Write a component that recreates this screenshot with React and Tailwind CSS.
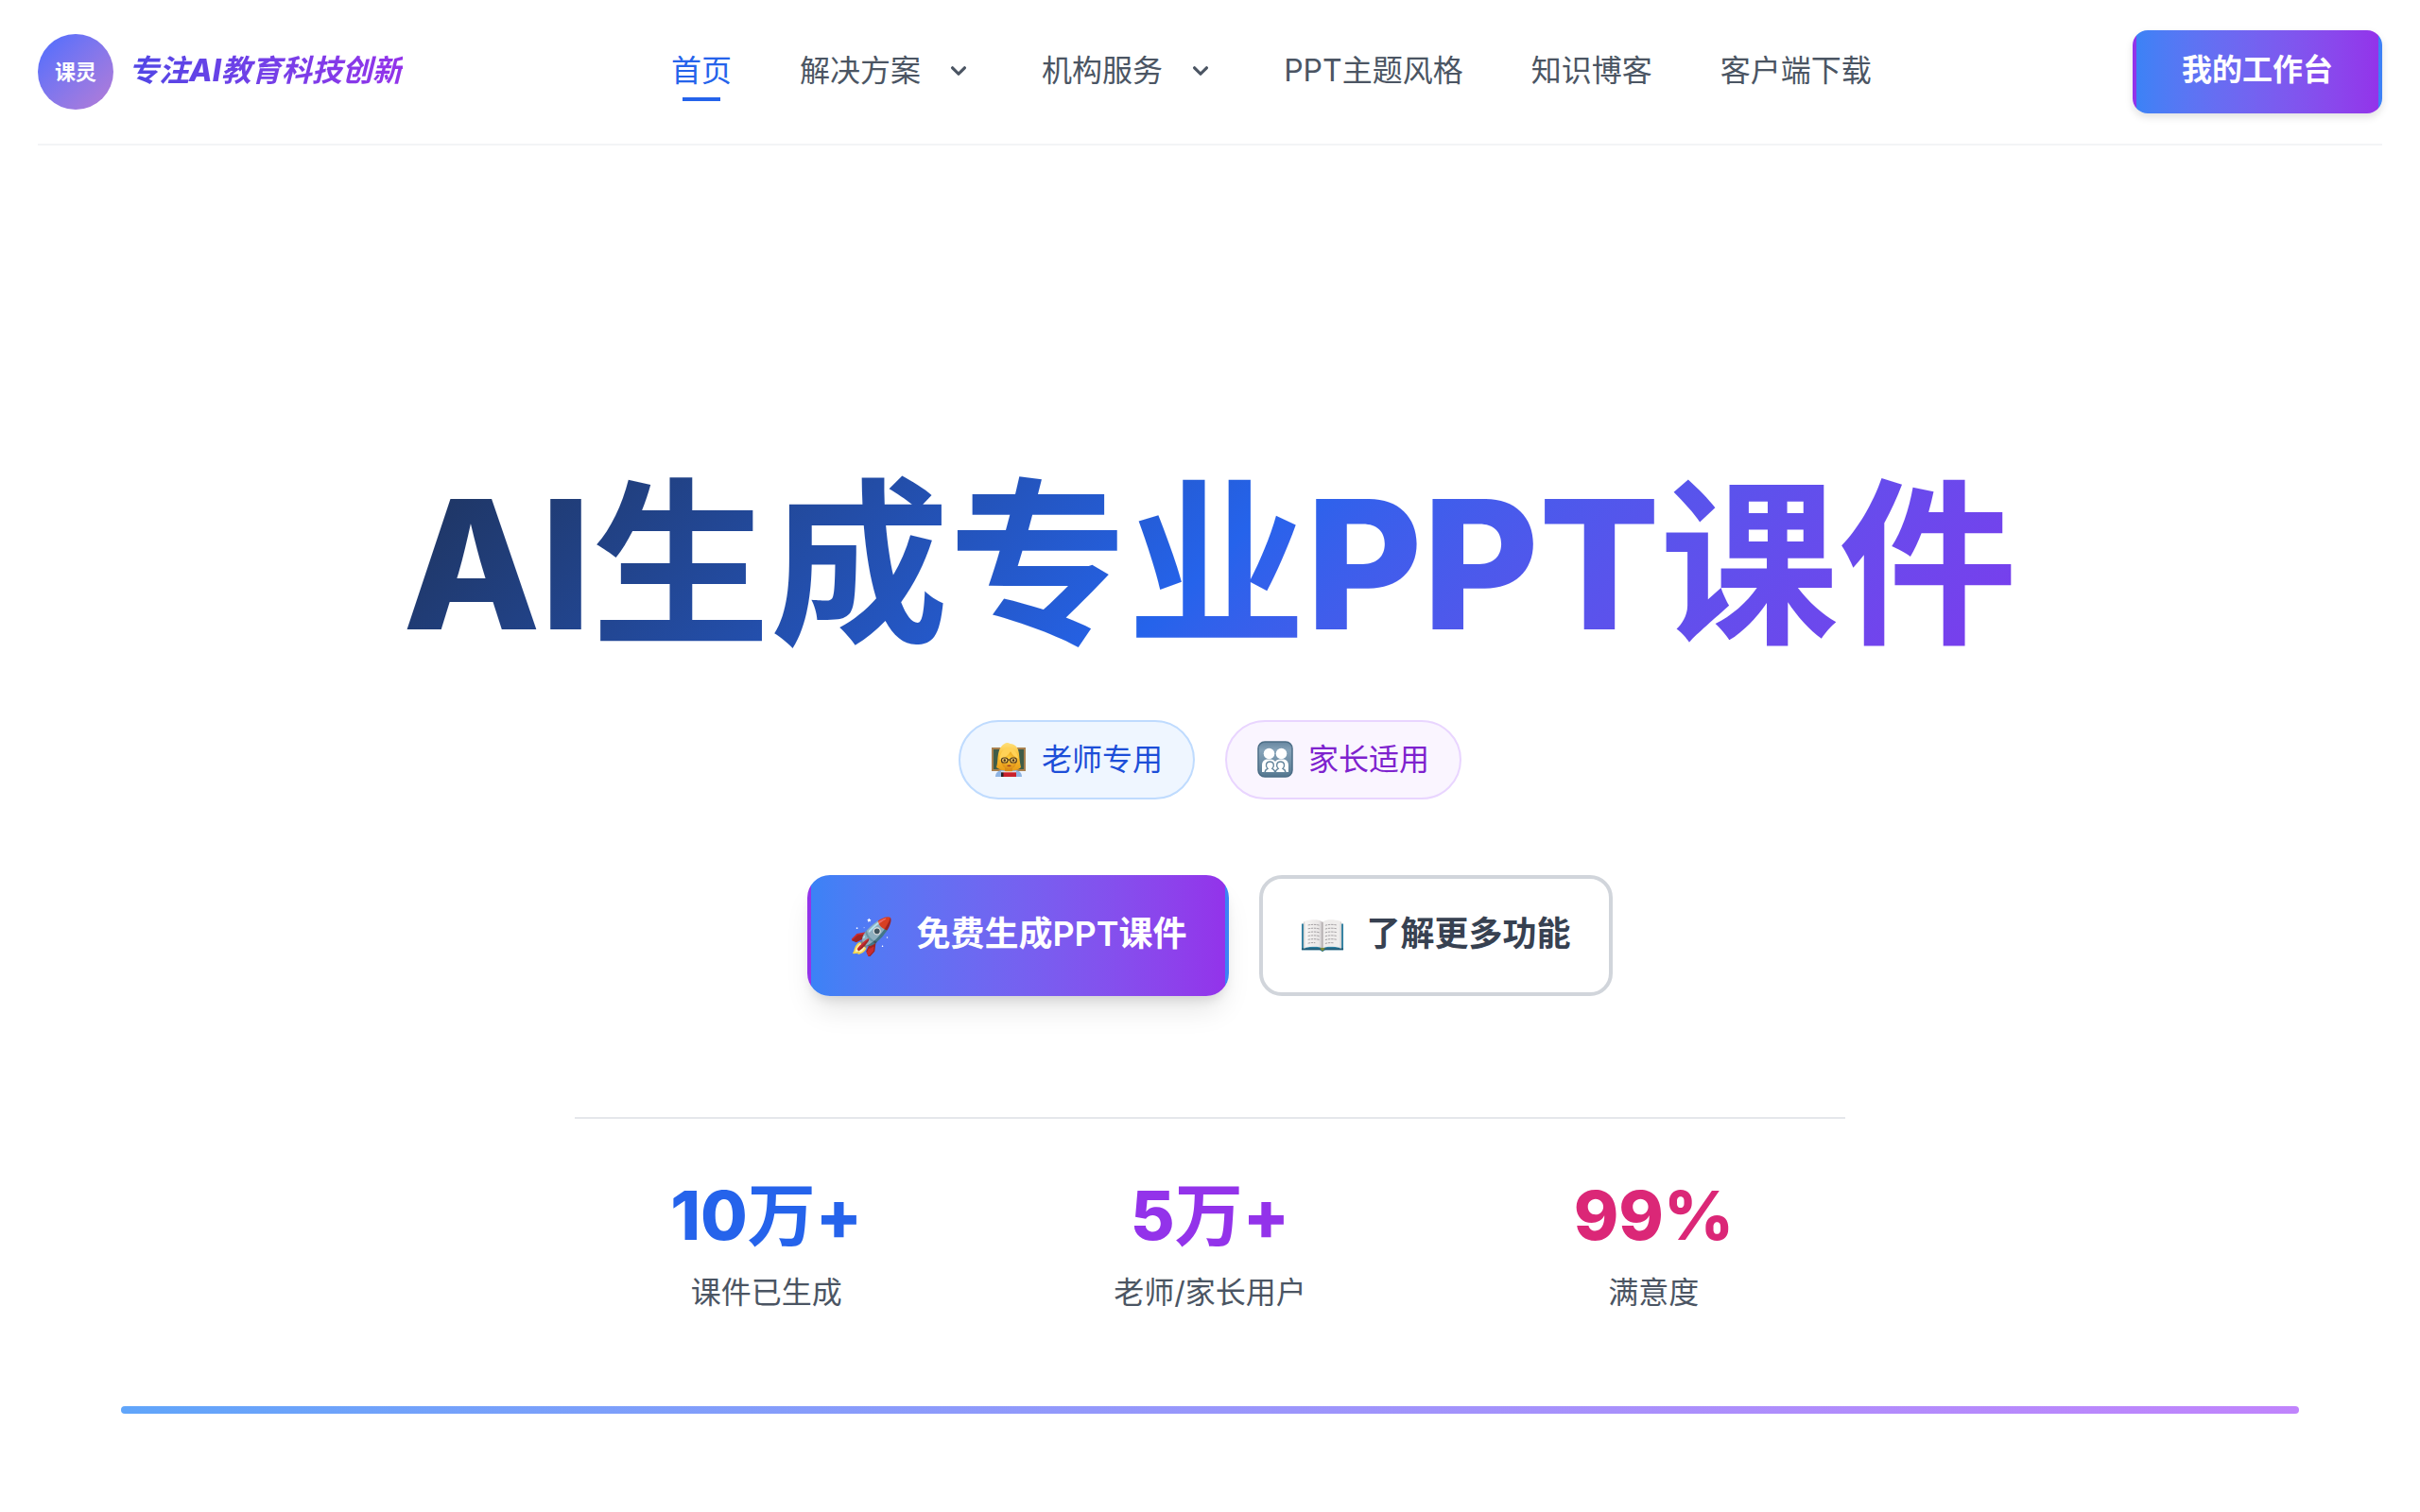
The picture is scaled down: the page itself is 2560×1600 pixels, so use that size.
const navItems = [
  { label: "首页", active: true },
  { label: "解决方案", menu: true },
  { label: "机构服务", menu: true },
  { label: "PPT主题风格" },
  { label: "知识博客" },
  { label: "客户端下载" },
];

const stats = [
  { value: "10万+", label: "课件已生成", color: "text-[#2563eb]" },
  { value: "5万+", label: "老师/家长用户", color: "text-[#9333ea]" },
  { value: "99%", label: "满意度", color: "text-[#db2777]" },
];

// latin runs are set one weight heavier than the chinese text around them
const MixedText = ({ text }) =>
  text.split(/([\x21-\x7e]+)/).map((part, idx) =>
    idx % 2 ? (
      <span key={idx} className="font-extrabold">
        {part}
      </span>
    ) : (
      part
    ),
  );

const ChevronIcon = () => (
  <svg
    className="size-8 shrink-0"
    viewBox="0 0 20 20"
    fill="currentColor"
    aria-hidden="true"
  >
    <path
      fillRule="evenodd"
      clipRule="evenodd"
      d="M5.293 7.293a1 1 0 011.414 0L10 10.586l3.293-3.293a1 1 0 111.414 1.414l-4 4a1 1 0 01-1.414 0l-4-4a1 1 0 010-1.414z"
    />
  </svg>
);

const TeacherIcon = () => (
  <svg className="h-9 w-[38px] shrink-0" viewBox="0 0 38 36" aria-hidden="true">
    <defs>
      <linearGradient id="teacherHair" x1="0" y1="0" x2="0" y2="1">
        <stop offset="0" stopColor="#ffe07a" />
        <stop offset="0.5" stopColor="#f9bd2e" />
        <stop offset="1" stopColor="#e79d1a" />
      </linearGradient>
      <radialGradient id="teacherFace" cx="0.5" cy="0.4" r="0.6">
        <stop offset="0" stopColor="#ffd23c" />
        <stop offset="1" stopColor="#dd8d15" />
      </radialGradient>
    </defs>
    <rect x="1" y="5" width="36" height="25" fill="#a9814f" />
    <rect x="3" y="7" width="32" height="21" fill="#3f5c48" />
    <path d="M5 36c0-5 4-7 9-7.500h10c5 .5 9 2.500 9 7.500z" fill="#8fb4e3" />
    <path
      d="M17 0c1.500 0 2.500.3 3.500 1 6 .3 9 5 9.500 11 .4 5 1 9.500 2 14-3 3-7 3.500-12.500 3.500S10 29 6 26c1.500-4 1-9 2-14C9.200 5.500 12.500 1 17 0z"
      fill="url(#teacherHair)"
    />
    <path d="M15 26h8v4c-2 2-6 2-8 0z" fill="#d98a17" />
    <ellipse cx="19.300" cy="18.500" rx="8.300" ry="9.500" fill="url(#teacherFace)" />
    <path
      d="M9.500 18c0-5 2-9 7-13 5-.5 11 3 13 12-4-1.500-7-4.500-8.500-8C19 13 14.500 16.500 9.500 18z"
      fill="#ffd257"
    />
    <g fill="#ffe08a" fillOpacity="0.6" stroke="#4c3820" strokeWidth="1.200">
      <rect x="11.500" y="16" width="6.500" height="5" rx="2.300" />
      <rect x="20.800" y="16" width="6.500" height="5" rx="2.300" />
      <path d="M18 18h2.800" />
    </g>
    <circle cx="14.800" cy="18.500" r="1.200" fill="#3f2a18" />
    <circle cx="24" cy="18.500" r="1.200" fill="#3f2a18" />
    <path d="M16.800 24c1.600-.8 3.600-.8 5.200 0-1.600 1.700-3.600 1.700-5.200 0z" fill="#a23f22" />
    <path d="M11 31h16v5H11z" fill="#c9202c" />
    <path d="M11 31h2.500v5H11z" fill="#2b2326" />
    <path d="M11 30.300h16v1H11z" fill="#f3f3f3" />
  </svg>
);

const FamilyIcon = () => (
  <svg className="h-11 w-[38px] shrink-0" viewBox="0 0 38 44" aria-hidden="true">
    <defs>
      <linearGradient id="familyTile" x1="0" y1="0" x2="0" y2="1">
        <stop offset="0" stopColor="#6786a0" />
        <stop offset="0.25" stopColor="#86a3b9" />
        <stop offset="1" stopColor="#55778f" />
      </linearGradient>
    </defs>
    <rect
      x="1"
      y="3"
      width="36"
      height="37"
      rx="7"
      fill="url(#familyTile)"
      stroke="#4c6d86"
      strokeWidth="1.500"
    />
    <g fill="#fff">
      <circle cx="12.500" cy="15.500" r="5.800" />
      <circle cx="25.500" cy="15.500" r="5.800" />
      <path d="M5 35V28c0-5 3-6.500 6-6.500h3c2.500 0 4 1 5 2.500 1-1.500 2.500-2.500 5-2.500h3c3 0 6 1.500 6 6.500v7z" />
    </g>
    <g fill="#fff" stroke="#64859c" strokeWidth="1.400">
      <path d="M8 36c.2-3 1.200-4 3-4.600-3-3.400-1.600-7.400 2.400-7.400s5.400 4 2.400 7.400c1.600.6 2.800 1.600 3.200 4.600" />
      <path d="M19 36c.4-3 1.600-4 3.200-4.600-3-3.400-1.600-7.400 2.400-7.400s5.400 4 2.400 7.400c1.800.6 2.800 1.600 3 4.600" />
    </g>
    <path d="M7 35.500h24" stroke="#64859c" strokeWidth="1" />
  </svg>
);

const BookIcon = () => (
  <svg className="h-9 w-[46px] shrink-0" viewBox="-1 0 48 36" aria-hidden="true">
    <defs>
      <linearGradient id="bookPage" x1="0" y1="0" x2="1" y2="0">
        <stop offset="0" stopColor="#f7f5f4" />
        <stop offset="0.8" stopColor="#e9e6e6" />
        <stop offset="1" stopColor="#c4bfc1" />
      </linearGradient>
    </defs>
    <path d="M0 5h4v25h38V5h4v29H26l-3 2-3-2H0z" fill="#2f7fa0" />
    <path d="M0 32h46v2H0z" fill="#1f5873" />
    <path d="M2 3l2-1v30H2zM42 2l2 1v29h-2z" fill="#d9d4d2" />
    <path
      d="M3.500 2C10 .5 18-.5 23 3v29c-5-2.500-12-2-19.500-.5z"
      fill="url(#bookPage)"
    />
    <path
      d="M42.500 2C36 .5 28-.5 23 3v29c5-2.500 12-2 19.500-.5z"
      fill="#efedec"
    />
    <path d="M23 3v28" stroke="#a9a3a5" strokeWidth="1.200" />
    <path
      d="M7 6.500c4-.8 9-1 13 .3M7 10.500c4-.8 9-1 13 .3M7 14.500c4-.8 9-1 13 .3M7 18.500c4-.8 9-1 13 .3M7 22.500c4-.8 9-1 13 .3M7 26.500c3-.6 5-.8 8-.5M26 6.800c4-1.300 9-1.100 13-.3M26 10.800c4-1.300 9-1.100 13-.3M26 14.800c4-1.300 9-1.100 13-.3M26 18.800c4-1.300 9-1.100 13-.3M26 22.800c4-1.300 9-1.100 13-.3M26 26.800c3-.9 6-1 9-.7"
      fill="none"
      stroke="#8f8b8e"
      strokeWidth="0.8"
      strokeDasharray="2.500 0.8"
    />
    <path d="M20 32c2-1 4-1 6 0l-3 3.500z" fill="#7d8a3a" />
  </svg>
);

const NavItem = ({ item }) => {
  if (item.menu) {
    return (
      <button type="button" className="flex items-center gap-6">
        {item.label}
        <ChevronIcon />
      </button>
    );
  }
  return (
    <a href="#" className={item.active ? "relative text-[#2563eb]" : ""}>
      {item.label}
      {item.active && (
        <span className="absolute -bottom-2 left-1/2 h-1 w-10 -translate-x-1/2 bg-[#2563eb]" />
      )}
    </a>
  );
};

const Header = () => (
  <header className="mx-10 flex items-center justify-between border-b-2 border-[#f3f4f6] py-8">
    <a href="#" className="flex items-center gap-4 pr-2">
      <span className="flex size-20 items-center justify-center rounded-full bg-linear-135 from-[#4a6cff] to-[#b57bd6] text-[22px] font-bold text-white">
        课灵
      </span>
      <span className="bg-linear-to-r from-[#4f46e5] to-[#9333ea] bg-clip-text pb-0.5 text-[32px] leading-12 font-bold text-transparent italic">
        <MixedText text="专注AI教育科技创新" />
      </span>
    </a>
    <nav className="flex items-center gap-18 pb-0.5 text-[32px] leading-12 font-normal text-[#4b5563]">
      {navItems.map((item) => (
        <NavItem key={item.label} item={item} />
      ))}
    </nav>
    <button
      type="button"
      className="rounded-2xl border-4 border-transparent bg-linear-to-r from-[#3b82f6] to-[#9333ea] px-12 pt-3.5 pb-4.5 text-[32px] leading-12 font-semibold text-white shadow-[0_4px_8px_rgba(0,0,0,0.12)]"
    >
      我的工作台
    </button>
  </header>
);

const Hero = () => (
  <section className="flex flex-col items-center pt-[328px]">
    <h1 className="bg-linear-135 from-[#1e325a] via-[#2563eb] to-[#7c3aed] bg-clip-text text-[189px] leading-[232px] font-bold whitespace-nowrap text-transparent">
      <MixedText text="AI生成专业PPT课件" />
    </h1>

    <div className="mt-12 flex gap-8 text-[32px] leading-12 font-normal">
      <span className="flex items-center gap-4 rounded-full border-2 border-[#bfdbfe] bg-[#eff6ff] px-8 py-4 text-[#1d4ed8]">
        <TeacherIcon />
        老师专用
      </span>
      <span className="flex items-center gap-4 rounded-full border-2 border-[#e9d5ff] bg-[#faf5ff] px-8 py-4 text-[#7e22ce]">
        <FamilyIcon />
        家长适用
      </span>
    </div>

    <div className="mt-20 flex gap-8 text-[36px] leading-14 font-semibold">
      <button
        type="button"
        className="flex items-center gap-6 rounded-3xl border-4 border-transparent bg-linear-to-r from-[#3b82f6] to-[#9333ea] px-10 py-8 text-white shadow-[0_20px_30px_-6px_rgba(0,0,0,0.1),0_8px_12px_-4px_rgba(0,0,0,0.1)]"
      >
        <span className="text-[38px]">🚀</span>
        <span className="-mt-0.5 pb-0.5">免费生成PPT课件</span>
      </button>
      <button
        type="button"
        className="flex items-center gap-6 rounded-3xl border-4 border-[#d1d5db] bg-white px-10 py-8 text-[#374151]"
      >
        <BookIcon />
        <span className="-mt-0.5 pb-0.5">了解更多功能</span>
      </button>
    </div>

    <dl className="mt-32 grid w-full max-w-[1344px] grid-cols-3 gap-16 border-t-2 border-[#e5e7eb] pt-[62px] text-center">
      {stats.map((stat) => (
        <div key={stat.label} className="flex flex-col-reverse gap-[18px]">
          <dt className="text-[32px] leading-12 text-[#4b5563]">
            {stat.label}
          </dt>
          <dd className={`text-[72px] leading-20 font-bold ${stat.color}`}>
            <MixedText text={stat.value} />
          </dd>
        </div>
      ))}
    </dl>
  </section>
);

const App = () => {
  return (
    <div className="min-h-screen bg-white font-['Inter','Noto_Sans_CJK_SC',sans-serif] [font-optical-sizing:none]">
      <Header />
      <main>
        <Hero />
        <div className="mx-32 mt-24 h-2 rounded-full bg-linear-to-r from-[#60a5fa] to-[#c084fc]" />
      </main>
    </div>
  );
};

export default App;
